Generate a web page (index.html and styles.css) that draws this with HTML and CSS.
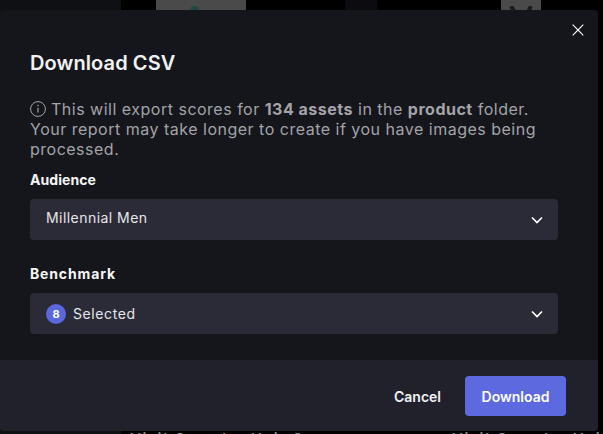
FILE: index.html
```html
<!DOCTYPE html>
<html lang="en">
<head>
<meta charset="utf-8">
<title>Download CSV</title>
<link rel="stylesheet" href="styles.css">
</head>
<body>
<div class="backdrop">
  <div class="side"></div>
  <div class="thumb thumb-a"><span class="thumb-mark"></span></div>
  <div class="gap-card"></div>
  <div class="thumb thumb-b">
    <svg width="40" height="10" viewBox="0 0 40 10"><path d="M10 0 L16 10 M30 0 L25 10" stroke="#1c1c1c" stroke-width="4" fill="none"/></svg>
  </div>
  <div class="caption caption-a">Visit Sampler Hair Care</div>
  <div class="caption caption-b">Visit Sampler Hair Care</div>
</div>
<div class="modal" role="dialog">
  <button class="close" aria-label="Close">
    <svg width="12" height="12" viewBox="0 0 12 12"><path d="M.7.7l10.6 10.6M11.300.7.7 11.300" stroke="#fff" stroke-width="1.200" fill="none"/></svg>
  </button>
  <div class="content">
    <h1 class="title">Download CSV</h1>
    <p class="desc"><svg class="info" width="16" height="16" viewBox="0 0 16 16"><circle cx="8" cy="8" r="7.400" stroke="#a3a3a8" stroke-width="1" fill="none"/><path d="M8 6.800v4.700" stroke="#a3a3a8" stroke-width="1.200"/><circle cx="8" cy="4.500" r=".8" fill="#a3a3a8"/></svg> This will export scores for <b>134 assets</b> in the <b>product</b> folder. Your report may take longer to create if you have images being processed.</p>
    <div class="field field-first">
      <div class="label">Audience</div>
      <div class="select">
        <span class="value value-raised">Millennial Men</span>
        <svg class="chev" width="12" height="8" viewBox="0 0 12 8"><path d="M1 1.500l5 5 5-5" stroke="#fff" stroke-width="1.700" fill="none"/></svg>
      </div>
    </div>
    <div class="field">
      <div class="label label-wide">Benchmark</div>
      <div class="select">
        <span class="value value-wide"><span class="badge">8</span>Selected</span>
        <svg class="chev" width="12" height="8" viewBox="0 0 12 8"><path d="M1 1.500l5 5 5-5" stroke="#fff" stroke-width="1.700" fill="none"/></svg>
      </div>
    </div>
  </div>
  <div class="footer">
    <button class="btn-cancel">Cancel</button>
    <button class="btn-primary">Download</button>
  </div>
</div>
</body>
</html>
```

FILE: styles.css
```css
* { box-sizing: border-box; }
html, body { margin: 0; height: 100%; }
body {
  position: relative;
  overflow: hidden;
  background: #000;
  font-family: "Inter", "Noto Sans", sans-serif;
  color: #fff;
}
.backdrop { position: absolute; inset: 0; overflow: hidden; }
.side { position: absolute; left: 0; top: 0; width: 121px; height: 100%; background: #0f1014; }
.thumb { position: absolute; top: 0; height: 12px; background: #4a4a4a; overflow: hidden; }
.thumb-a { left: 156px; width: 90px; }
.thumb-b { left: 501px; width: 40px; }
.thumb-mark { position: absolute; left: 34px; top: 6px; width: 9px; height: 9px; background: #1e4a45; border-radius: 50%; }
.gap-card { position: absolute; left: 345px; top: 0; width: 32px; height: 12px; background: #0c0c10; }
.caption { position: absolute; top: 430px; font-size: 15px; font-weight: 600; line-height: 18px; color: #8a8a8a; white-space: nowrap; letter-spacing: 1.500px; }
.caption-a { left: 130px; }
.caption-b { left: 452px; }

.modal {
  position: absolute;
  left: 0;
  top: 10px;
  width: 598px;
  height: 421px;
  display: flex;
  flex-direction: column;
  background: #15161b;
  border-radius: 4px;
  overflow: hidden;
}
.close {
  position: absolute;
  top: 14px;
  right: 14px;
  width: 12px;
  height: 12px;
  padding: 0;
  display: flex;
  border: 0;
  background: none;
}
.content { flex: 1; padding: 41px 40px 0 30px; }
.title { margin: 0; font-size: 20px; line-height: 24px; font-weight: 600; color: #f2f2f3; letter-spacing: 0.1px; }
.desc {
  margin: 24px 0 0;
  font-size: 16px;
  line-height: 20px;
  color: #a3a3a8;
  letter-spacing: 0.5px;
}
.desc b { font-weight: 700; }
.info { vertical-align: -2px; }
.field { margin-top: 25px; }
.field-first { margin-top: 12px; }
.label { font-size: 14px; line-height: 18px; font-weight: 700; color: #f7f7f8; letter-spacing: 0.05px; }
.label-wide { letter-spacing: 0.85px; }
.select {
  margin-top: 10px;
  width: 528px;
  height: 41px;
  padding: 0 15px 0 16px;
  display: flex;
  align-items: center;
  justify-content: space-between;
  background: #2b2b38;
  border-radius: 4px;
}
.value { display: flex; align-items: center; font-size: 14px; color: #e6e6e8; letter-spacing: 0.45px; }
.value-raised { margin-bottom: 4px; }
.value-wide { letter-spacing: 0.6px; }
.badge {
  width: 20px;
  height: 20px;
  margin-right: 7px;
  display: flex;
  align-items: center;
  justify-content: center;
  border-radius: 50%;
  background: #5a68dc;
  font-size: 11px;
  font-weight: 700;
  color: #fff;
  letter-spacing: 0;
}
.footer {
  height: 71px;
  padding: 16px 32px 15px 0;
  display: flex;
  align-items: center;
  justify-content: flex-end;
  gap: 24px;
  background: #20212b;
}
.btn-cancel, .btn-primary { font-family: inherit; font-size: 14px; font-weight: 600; border: 0; padding: 0; color: #f2f2f3; }
.btn-cancel { background: none; }
.btn-primary { width: 101px; height: 40px; background: #5d69de; color: #fff; border-radius: 4px; }
```
